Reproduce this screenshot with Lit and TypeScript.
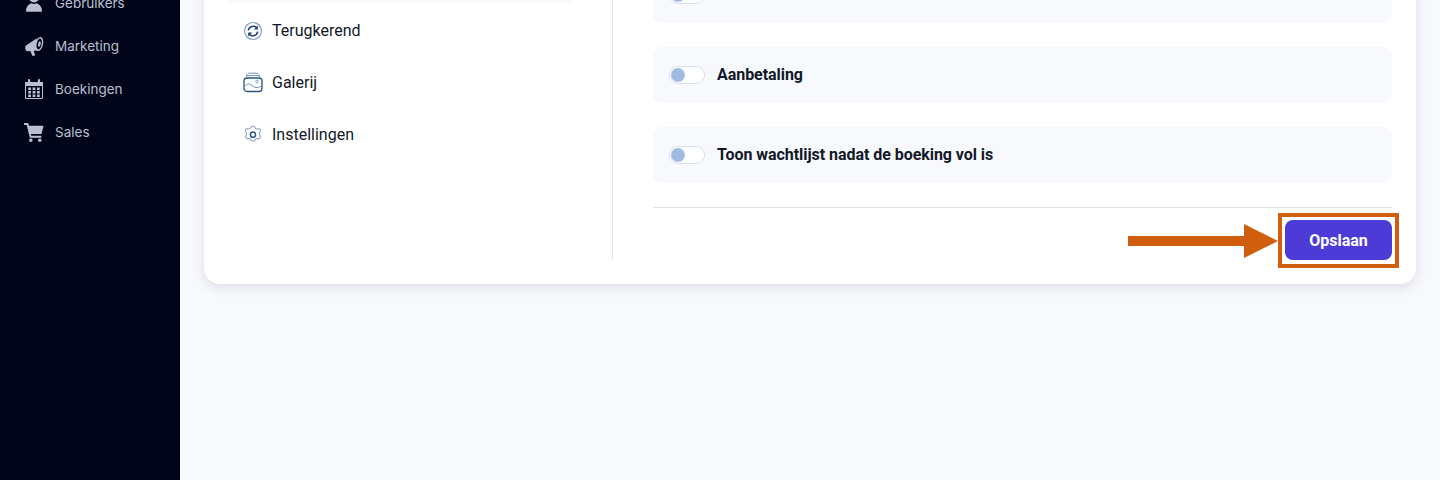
import { LitElement, html, css, svg } from "lit";
import { customElement } from "lit/decorators.js";

const sideIcons: Record<string, unknown> = {
  user: svg`<circle cx="10" cy="4.500" r="5" fill="currentColor"/><path d="M2 18c0-4.200 2.500-6.800 5.500-7.800 1.500 1 3.500 1 5 0 3 1 5.500 3.600 5.500 7.800 0 .6-.3 .8-.8 .8H2.800c-.5 0-.8-.2-.8-.8z" fill="currentColor"/>`,
  mega: svg`<path d="M2 9.500L12.500 2.500 15 14.500 9.700 14.800 11.200 19.600 8.500 20 6.300 15 4.200 15.300C1.500 15.500 .3 11.500 2 9.500z" fill="currentColor"/><ellipse cx="15.200" cy="8" rx="3.900" ry="7.200" transform="rotate(12 15.200 8)" fill="currentColor"/><ellipse cx="15.200" cy="8" rx="2.500" ry="5.500" transform="rotate(12 15.200 8)" fill="#02041a"/><ellipse cx="15.400" cy="8" rx="1.300" ry="2.800" transform="rotate(12 15.400 8)" fill="currentColor"/>`,
  cal: svg`<path d="M1.500 3.500h17v16h-17z" fill="none" stroke="currentColor" stroke-width="1"/><path d="M1 3h18v4H1z" fill="currentColor"/><rect x="4" y="0" width="2.200" height="5" rx="1.100" fill="currentColor"/><rect x="13.800" y="0" width="2.200" height="5" rx="1.100" fill="currentColor"/><g fill="currentColor"><rect x="4.200" y="8.500" width="2.800" height="2.500"/><rect x="8.600" y="8.500" width="2.800" height="2.500"/><rect x="13" y="8.500" width="2.800" height="2.500"/><rect x="4.200" y="12" width="2.800" height="2.500"/><rect x="8.600" y="12" width="2.800" height="2.500"/><rect x="13" y="12" width="2.800" height="2.500"/><rect x="4.200" y="15.500" width="2.800" height="2.500"/><rect x="8.600" y="15.500" width="2.800" height="2.500"/><rect x="13" y="15.500" width="2.800" height="2.500"/></g>`,
  cart: svg`<path d="M0 1h4.200l.8 2.700H19.500l-2 8.300H6.800l.5 1.700H17.300v2H5.800L2.700 3H0z" fill="currentColor"/><circle cx="6.800" cy="18.300" r="1.700" fill="currentColor"/><circle cx="15.800" cy="18.300" r="1.700" fill="currentColor"/>`,
};

const menuIcons: Record<string, unknown> = {
  sync: svg`<g transform="translate(0 1)"><circle cx="10" cy="10" r="8.500" fill="none" stroke="#7f9ac2" stroke-width="1.200"/><path d="M5.300 9.300A4.800 4.800 0 0 1 13.600 6.800M14.700 10.700A4.800 4.800 0 0 1 6.400 13.200" fill="none" stroke="#1f3f6b" stroke-width="1.600"/><path d="M14.800 4.600v4h-4zM5.200 15.400v-4h4z" fill="#1f3f6b"/></g>`,
  gallery: svg`<rect x="1" y="6" width="18" height="13.500" rx="3" fill="none" stroke="#2c5282" stroke-width="1.300"/><path d="M3.300 6C3.500 3 4.500 1.200 6.500 1.200h7c2 0 3 1.800 3.200 4.800M4 3.600h12" fill="none" stroke="#6f8fbb" stroke-width="1"/><path d="M1.500 14.500c3-3.200 5-3 7.500-1s5 3.200 9.500.5" fill="none" stroke="#6f8fbb" stroke-width="1"/><circle cx="14" cy="9.500" r="1.300" fill="none" stroke="#7f9ac2" stroke-width=".9"/>`,
  gear: svg`<g transform="translate(0 1)"><path d="M8.200 2.200c.8-1.300 2.800-1.300 3.600 0l.6 1c.4.600 1.100.9 1.800.8l1.200-.1c1.500-.1 2.500 1.600 1.700 2.900l-.6 1c-.3.600-.3 1.300 0 1.900l.6 1c.8 1.300-.2 3-1.700 2.900l-1.200-.1c-.7 0-1.400.2-1.800.8l-.6 1c-.8 1.300-2.800 1.300-3.600 0l-.6-1c-.4-.6-1.100-.9-1.800-.8l-1.200.1c-1.500.1-2.500-1.600-1.700-2.900l.6-1c.3-.6.300-1.300 0-1.900l-.6-1C1.600 5.500 2.600 3.800 4.100 3.900l1.200.1c.7 0 1.400-.2 1.800-.8z" fill="none" stroke="#8fa6c9" stroke-width="1.100"/><circle cx="10" cy="9.700" r="2.600" fill="none" stroke="#2c5282" stroke-width="1.500"/></g>`,
};

@customElement("app-root")
export class AppRoot extends LitElement {
  static styles = css`
    :host { display: block; height: 480px; overflow: hidden; background: #f8f9fd; font-family: Roboto, "Liberation Sans", sans-serif; }
    .page { display: flex; height: 480px; overflow: hidden; }
    .side { width: 180px; flex: none; background: #02041a; color: #b9c0cf; font: 400 13.500px Inter, sans-serif; padding: 0 0 0 24px; box-sizing: border-box; }
    .side-list { display: flex; flex-direction: column; gap: 23px; margin-top: -7px; }
    .side-item { display: flex; align-items: center; gap: 11px; height: 20px; }
    .side-item svg { width: 20px; height: 20px; flex: none; overflow: visible; }
    .main { flex: 1; padding: 0 24px; min-width: 0; }
    .card { position: relative; margin-top: -100px; height: 384px; box-sizing: border-box; background: #fff; border-radius: 0 0 16px 16px; box-shadow: 0 4px 12px rgba(30,40,80,.12); display: flex; padding: 0 24px 24px; }
    .menu { width: 344px; flex: none; display: flex; flex-direction: column; }
    .menu-item { height: 52px; display: flex; align-items: center; gap: 9px; padding-left: 15px; color: #111827; font-size: 16px; }
    .menu-item svg { width: 20px; height: 20px; flex: none; overflow: visible; }
    .active { background: #f8f9fd; border-radius: 5px; height: 52px; margin-top: 51px; margin-bottom: 1px; }
    .panel { margin-left: 40px; border-left: 1px solid #e2e3e7; padding-left: 40px; flex: 1; display: flex; flex-direction: column; min-width: 0; }
    .rows { display: flex; flex-direction: column; gap: 24px; margin-top: 67px; }
    .row { height: 56px; background: #f8f9fd; border-radius: 8px; display: flex; align-items: center; gap: 12px; padding-left: 16px; font-weight: 700; font-size: 16px; color: #111827; }
    .label { padding-bottom: 2px; letter-spacing: -.05px; }
    .toggle { width: 36px; height: 18px; box-sizing: border-box; border: 1px solid #d5dff0; border-radius: 9px; background: #fff; display: flex; align-items: center; padding-left: 1px; flex: none; }
    .knob { width: 14px; height: 14px; border-radius: 50%; background: #a3bbe3; }
    .footer { margin-top: 24px; border-top: 1px solid #e0e0e0; padding-top: 12px; display: flex; justify-content: flex-end; }
    .save { width: 107px; height: 40px; border: 0; border-radius: 8px; background: #4c3bd6; color: #fff; font: 700 16px Roboto, sans-serif; padding: 0; }
    .mark { position: absolute; left: 1074px; top: 313px; width: 121px; height: 55px; box-sizing: border-box; border: 4px solid #cf5f0f; }
    .arrow { position: absolute; left: 924px; top: 324px; width: 150px; height: 34px; }
  `;

  render() {
    const side = [["user", "Gebruikers"], ["mega", "Marketing"], ["cal", "Boekingen"], ["cart", "Sales"]];
    const menu = [["sync", "Terugkerend"], ["gallery", "Galerij"], ["gear", "Instellingen"]];
    return html`<div class="page">
      <nav class="side"><div class="side-list">
        ${side.map(([i, t]) => html`<div class="side-item"><svg viewBox="0 0 20 20">${sideIcons[i]}</svg><span>${t}</span></div>`)}
      </div></nav>
      <main class="main"><section class="card">
        <div class="menu">
          <div class="active"></div>
          ${menu.map(([i, t]) => html`<div class="menu-item"><svg viewBox="0 0 20 20">${menuIcons[i]}</svg><span>${t}</span></div>`)}
        </div>
        <div class="panel">
          <div class="rows">
            ${["Actief", "Aanbetaling", "Toon wachtlijst nadat de boeking vol is"].map((t) => html`<div class="row"><span class="toggle"><span class="knob"></span></span><span class="label">${t}</span></div>`)}
          </div>
          <div class="footer"><button class="save">Opslaan</button></div>
        </div>
        <svg class="arrow" viewBox="0 0 150 34"><path d="M0 12h116V0l34 17-34 17V22H0z" fill="#cf5f0f"/></svg>
        <div class="mark"></div>
      </section></main>
    </div>`;
  }
}
